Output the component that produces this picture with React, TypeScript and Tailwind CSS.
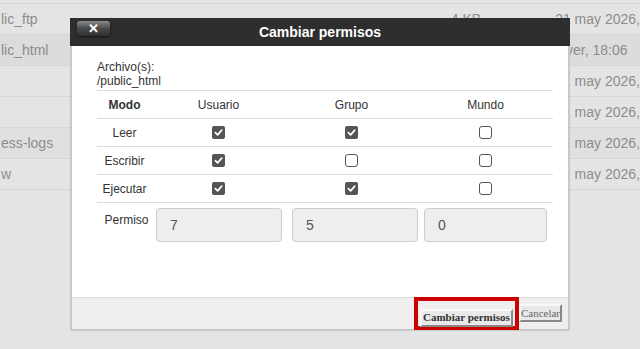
import React from "react";

const files = [
  { name: "lic_ftp", size: "4 KB", date: "21 may 2026,", shade: "bg-[#e4e4e4]" },
  { name: "lic_html", size: "", date: "Ayer, 18:06", shade: "bg-[#dcdcdc]" },
  { name: "", size: "", date: "21 may 2026,", shade: "bg-[#e4e4e4]" },
  { name: "", size: "", date: "21 may 2026,", shade: "bg-[#e4e4e4]" },
  { name: "ess-logs", size: "", date: "21 may 2026,", shade: "bg-[#e0e0e0]" },
  { name: "w", size: "", date: "21 may 2026,", shade: "bg-[#e4e4e4]" },
];

const perms = [
  { mode: "Leer", u: true, g: true, m: false },
  { mode: "Escribir", u: true, g: false, m: false },
  { mode: "Ejecutar", u: true, g: true, m: false },
];

const Check = ({ on }: { on: boolean }) =>
  on ? (
    <span className="w-[13px] h-[13px] rounded-[2px] bg-[#555555] flex items-center justify-center">
      <svg width="9" height="9" viewBox="0 0 10 10">
        <path d="M1.5 5.2 L4 7.6 L8.6 2.4" fill="none" stroke="#ffffff" strokeWidth="1.9" strokeLinecap="round" strokeLinejoin="round" />
      </svg>
    </span>
  ) : (
    <span className="w-[13px] h-[13px] rounded-[3px] bg-white border border-[#555555]" />
  );

const App = () => {
  return (
    <div className="relative w-[640px] h-[349px] overflow-hidden bg-[#e4e4e4] font-['Liberation_Sans',Arial,sans-serif]">
      {/* file list behind the dialog */}
      <div className="pt-[3px]">
        <div className="border-t border-[#d6d6d6]">
          {files.map((f, i) => (
            <div key={i} className={`h-[31px] flex items-center border-b border-[#d6d6d6] text-[14px] text-[#8c8c8c] ${f.shade}`}>
              <span className="w-[420px] pl-[1px]">{f.name}</span>
              <span className="w-[63px] text-right">{f.size}</span>
              <span className="ml-[74px] whitespace-nowrap">{f.date}</span>
            </div>
          ))}
        </div>
      </div>

      {/* dialog */}
      <div className="absolute left-[70px] top-[18px] w-[500px]">
        <div className="h-[28px] bg-[#2e2e2e] flex items-center relative">
          <button className="absolute left-[7px] top-[3px] w-[33px] h-[15px] rounded-[3px] bg-gradient-to-b from-[#8c8c8c] via-[#4a4a4a] to-[#2f2f2f] shadow-[0_1px_2px_rgba(0,0,0,0.6)] flex items-center justify-center text-white text-[13px] font-bold leading-none">
            ✕
          </button>
          <span className="flex-1 text-center text-white text-[14px] font-bold">Cambiar permisos</span>
        </div>
        <div className="border-x-2 border-b-2 border-[#c8c8c8]">
          <div className="h-[251px] bg-white pl-[25px] pr-[15px] pt-[14px] text-[12px] leading-[14px] text-[#333333]">
            <div>Archivo(s):</div>
            <div>/public_html</div>
            <div className="mt-[2px] border-t border-[#dddddd]">
              <div className="grid grid-cols-[55px_133px_133px_135px] h-[28px] items-center border-b border-[#dddddd]">
                <span className="text-center font-bold">Modo</span>
                <span className="text-center">Usuario</span>
                <span className="text-center">Grupo</span>
                <span className="text-center">Mundo</span>
              </div>
              {perms.map((p) => (
                <div key={p.mode} className="grid grid-cols-[55px_133px_133px_135px] h-[28px] items-center border-b border-[#dddddd]">
                  <span className="text-center">{p.mode}</span>
                  <span className="flex justify-center"><Check on={p.u} /></span>
                  <span className="flex justify-center"><Check on={p.g} /></span>
                  <span className="flex justify-center"><Check on={p.m} /></span>
                </div>
              ))}
              <div className="flex items-start pt-[5px]">
                <span className="w-[59px] text-center pt-[5px]">Permiso</span>
                {["7", "5", "0"].map((v, i) => (
                  <div
                    key={v}
                    className={`h-[34px] rounded-[4px] border border-[#cccccc] bg-[#eeeeee] flex items-center pl-[13px] text-[14px] text-[#555555] ${
                      i === 0 ? "w-[126px]" : i === 1 ? "ml-[10px] w-[126px]" : "ml-[6px] w-[123px]"
                    }`}
                  >
                    {v}
                  </div>
                ))}
              </div>
            </div>
          </div>
          <div className="h-[32px] bg-[#eeeeee] border-t border-[#dddddd] flex items-start justify-end pr-[6px]">
            <div className="h-[33px] -mt-[1px] border-[4px] border-[#cc0000] px-[2px] pt-[3px] relative z-10">
              <button className="h-[18px] px-[1px] bg-[#e9e9e9] border-2 border-t-[#f8f8f8] border-l-[#f8f8f8] border-b-[#888888] border-r-[#888888] text-[11px] font-bold leading-none text-[#333333] font-['Liberation_Serif',serif]">
                Cambiar permisos
              </button>
            </div>
            <button className="mt-[6px] h-[18px] px-0 bg-[#e9e9e9] border-2 border-t-[#f8f8f8] border-l-[#f8f8f8] border-b-[#888888] border-r-[#888888] text-[11px] leading-none text-[#666666] font-['Liberation_Serif',serif]">
              Cancelar
            </button>
          </div>
        </div>
      </div>
    </div>
  );
};

export default App;
